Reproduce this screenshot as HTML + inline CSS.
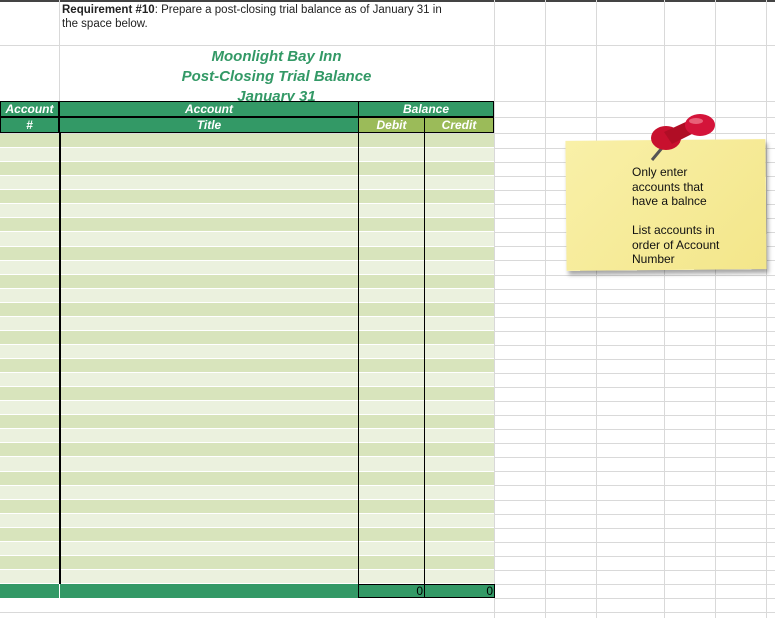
<!DOCTYPE html>
<html><head><style>
body{margin:0;width:775px;height:618px;position:relative;overflow:hidden;background:#fff;font-family:"Liberation Sans",sans-serif}
.a{position:absolute;box-sizing:border-box}
.g{background:#339966;color:#fff;font-weight:bold;font-style:italic;font-size:12px;text-align:center;line-height:15px}
.vl{position:absolute;width:1px;background:#d9d9d9}
.hl{position:absolute;height:1px;background:#d9d9d9}
</style></head><body>
<div class="a" style="left:0;top:0;width:775px;height:2px;background:#444"></div>
<div id="grid"></div>
<div class="a" style="left:62px;top:3px;width:392px;font-size:11.5px;line-height:14px;color:#222">
<b>Requirement #10</b>: Prepare a post-closing trial balance as of January 31 in<br>the space below.</div>
<div class="a" style="left:59px;top:47px;width:435px;text-align:center;color:#339966;font-weight:bold;font-style:italic;font-size:15px;line-height:20px">Moonlight Bay Inn<br>Post-Closing Trial Balance</div>
<div class="a" style="left:59px;top:87px;width:435px;height:14px;overflow:hidden;text-align:center;color:#339966;font-weight:bold;font-style:italic;font-size:15px;line-height:20px">January 31</div>
<div id="tbl"></div>
<div class="a" style="left:566px;top:140px;width:200px;height:130px;box-shadow:2px 4px 4px rgba(0,0,0,0.35);transform:rotate(-0.5deg);background:linear-gradient(135deg,#f9f0a8,#f3e68a)"></div>
<svg class="a" style="left:640px;top:108px" width="80" height="60" viewBox="0 0 80 60">
<line x1="22" y1="40" x2="12" y2="52" stroke="#555" stroke-width="3"/>
<ellipse cx="26" cy="30" rx="15" ry="12" fill="#c8102e"/>
<path d="M24 24 L50 12 L56 24 L32 36 Z" fill="#b00d25"/>
<ellipse cx="60" cy="17" rx="15" ry="11" fill="#d4143a"/>
<ellipse cx="56" cy="13" rx="7" ry="3" fill="#e86078"/>
</svg>
<div class="a" style="left:632px;top:165px;width:130px;font-size:12px;line-height:14.5px;color:#111">Only enter<br>accounts that<br>have a balnce<br><br>List accounts in<br>order of Account<br>Number</div>
<script>
var g='',xs=[494,545,596,664,715,766];
xs.forEach(x=>g+='<div class="vl" style="left:'+x+'px;top:0;height:618px"></div>');
g+='<div class="vl" style="left:59px;top:0;height:101px"></div>';
[45,101,117,133].forEach(y=>g+='<div class="hl" style="left:0;top:'+y+'px;width:775px"></div>');
for(var y=148;y<618;y+=14.06)g+='<div class="hl" style="left:494px;top:'+Math.round(y)+'px;width:281px"></div>';
g+='<div class="hl" style="left:0;top:612px;width:494px"></div>';
document.getElementById('grid').innerHTML=g;
var t='';
t+='<div class="a g" style="left:0;top:101px;width:59px;height:16px;border:1px solid #000">Account</div>';
t+='<div class="a g" style="left:0;top:117px;width:59px;height:16px;border:1px solid #000">#</div>';
t+='<div class="a g" style="left:59px;top:101px;width:300px;height:16px;border:1px solid #000">Account</div>';
t+='<div class="a g" style="left:59px;top:117px;width:300px;height:16px;border:1px solid #000">Title</div>';
t+='<div class="a g" style="left:358px;top:101px;width:136px;height:16px;border:1px solid #000">Balance</div>';
t+='<div class="a g" style="left:358px;top:117px;width:67px;height:16px;background:#9bbb59;border:1px solid #000">Debit</div>';
t+='<div class="a g" style="left:424px;top:117px;width:70px;height:16px;background:#9bbb59;border:1px solid #000">Credit</div>';
var n=32,h=(584-134)/n;
for(var i=0;i<n;i++){var y=Math.round(134+i*h),y2=Math.round(134+(i+1)*h);
t+='<div class="a" style="left:0;top:'+y+'px;width:494px;height:'+(y2-y-1)+'px;background:'+(i%2?'#ebf1de':'#d8e4bc')+'"></div>';}
t+='<div class="a" style="left:59px;top:133px;width:2px;height:451px;background:#000"></div>';
t+='<div class="a" style="left:358px;top:133px;width:1px;height:451px;background:#000"></div>';
t+='<div class="a" style="left:424px;top:133px;width:1px;height:451px;background:#000"></div>';
t+='<div class="a" style="left:0;top:584px;width:494px;height:14px;background:#339966"></div>';
t+='<div class="a" style="left:59px;top:584px;width:1px;height:14px;background:#fff"></div>';
t+='<div class="a" style="left:358px;top:584px;width:67px;height:14px;border:1px solid #000;font-size:12px;text-align:right;padding-right:1px;line-height:12px">0</div>';
t+='<div class="a" style="left:424px;top:584px;width:71px;height:14px;border:1px solid #000;font-size:12px;text-align:right;padding-right:1px;line-height:12px">0</div>';
document.getElementById('tbl').innerHTML=t;
</script>
</body></html>
